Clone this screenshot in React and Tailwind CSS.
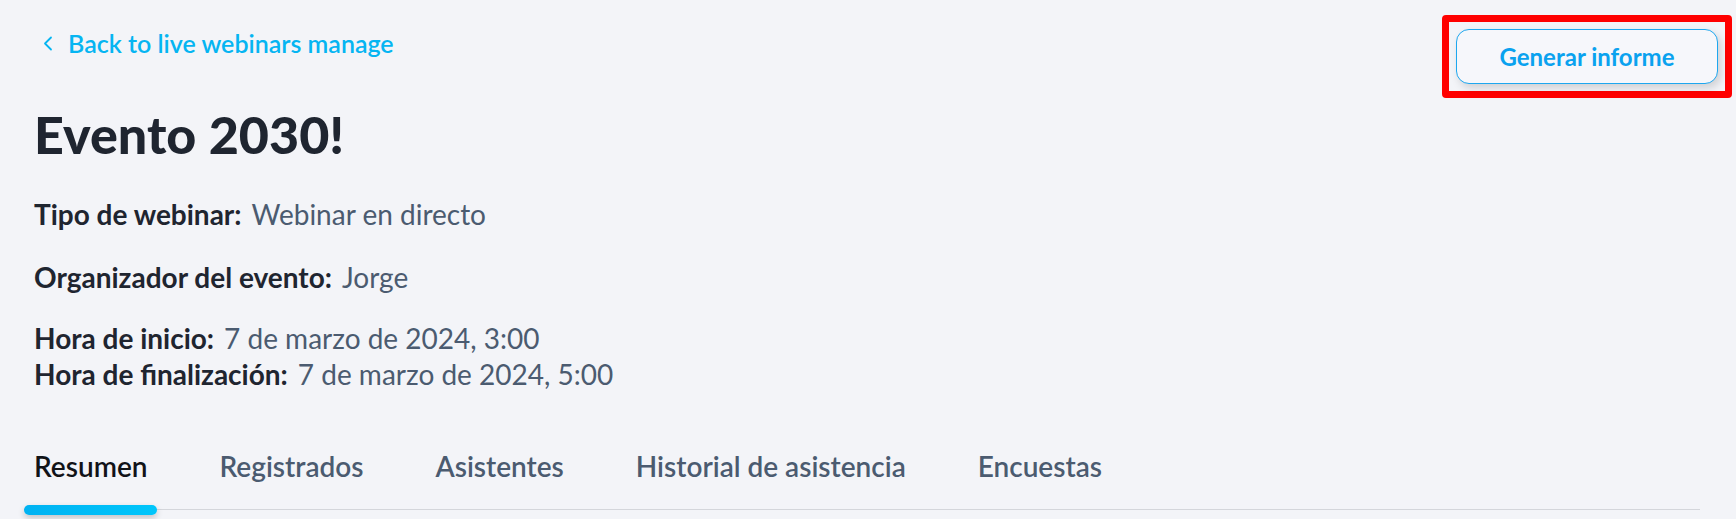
import React from "react";

export default function App() {
  const tabs = ["Resumen", "Registrados", "Asistentes", "Historial de asistencia", "Encuestas"];
  return (
    <div className="min-h-screen w-full bg-[#f3f4f8] font-['Lato',sans-serif] text-[#1f2530]">
      <div className="flex items-start justify-between pl-[34px] pr-[4px] pt-[15px]">
        <a className="mt-[13px] ml-[9px] flex items-center gap-[15px] text-[25px] leading-[30px] font-semibold text-[#05b5f2]" href="#">
          <svg width="10" height="15" viewBox="0 0 10 15" fill="none">
            <path d="M8 1.5L2 7.5L8 13.5" stroke="#05b5f2" strokeWidth="1.8" strokeLinecap="round" strokeLinejoin="round" />
          </svg>
          <span>Back to live webinars manage</span>
        </a>
        <div className="rounded-[4px] border-[7px] border-[#ff0000] p-[7px]">
          <button className="flex h-[55px] w-[262px] items-center justify-center rounded-[13px] border border-[#1ea7ef] bg-[#f6f7fb] text-[24px] font-bold text-[#0aa2ef] shadow-[3px_4px_8px_rgba(0,0,0,0.15)]">
            Generar informe
          </button>
        </div>
      </div>

      <div className="pl-[34px]">
        <h1 className="mt-[6px] text-[52px] leading-[60px] font-black text-[#1f2530]">Evento 2030!</h1>

        <div className="mt-[32px] flex items-baseline gap-[10px] text-[28px] leading-[36px]">
          <span className="font-bold text-[#1f2530]">Tipo de webinar:</span>
          <span className="text-[#4b5b70]">Webinar en directo</span>
        </div>
        <div className="mt-[27px] flex items-baseline gap-[10px] text-[28px] leading-[36px]">
          <span className="font-bold text-[#1f2530]">Organizador del evento:</span>
          <span className="text-[#4b5b70]">Jorge</span>
        </div>
        <div className="mt-[25px] flex flex-col text-[28px] leading-[36px]">
          <div className="flex items-baseline gap-[10px]">
            <span className="font-bold text-[#1f2530]">Hora de inicio:</span>
            <span className="text-[#4b5b70]">7 de marzo de 2024, 3:00</span>
          </div>
          <div className="flex items-baseline gap-[10px]">
            <span className="font-bold text-[#1f2530]">Hora de finalización:</span>
            <span className="text-[#4b5b70]">7 de marzo de 2024, 5:00</span>
          </div>
        </div>
      </div>

      <div className="ml-[24px] mt-[56px] w-[1676px] border-b border-[#d4d6db]">
        <div className="flex gap-[52px]">
          {tabs.map((t, i) => (
            <div key={t} className="relative px-[10px] pb-[25px]">
              <span className={"text-[28px] leading-[36px] font-semibold " + (i === 0 ? "text-[#111318]" : "text-[#4b5b70]")}>{t}</span>
              {i === 0 && (
                <div className="absolute bottom-[-6px] left-0 right-0 h-[10px] rounded-full bg-gradient-to-r from-[#00b2f2] to-[#00c6fb] shadow-[0_3px_6px_rgba(0,0,0,0.2)]" />
              )}
            </div>
          ))}
        </div>
      </div>
    </div>
  );
}
